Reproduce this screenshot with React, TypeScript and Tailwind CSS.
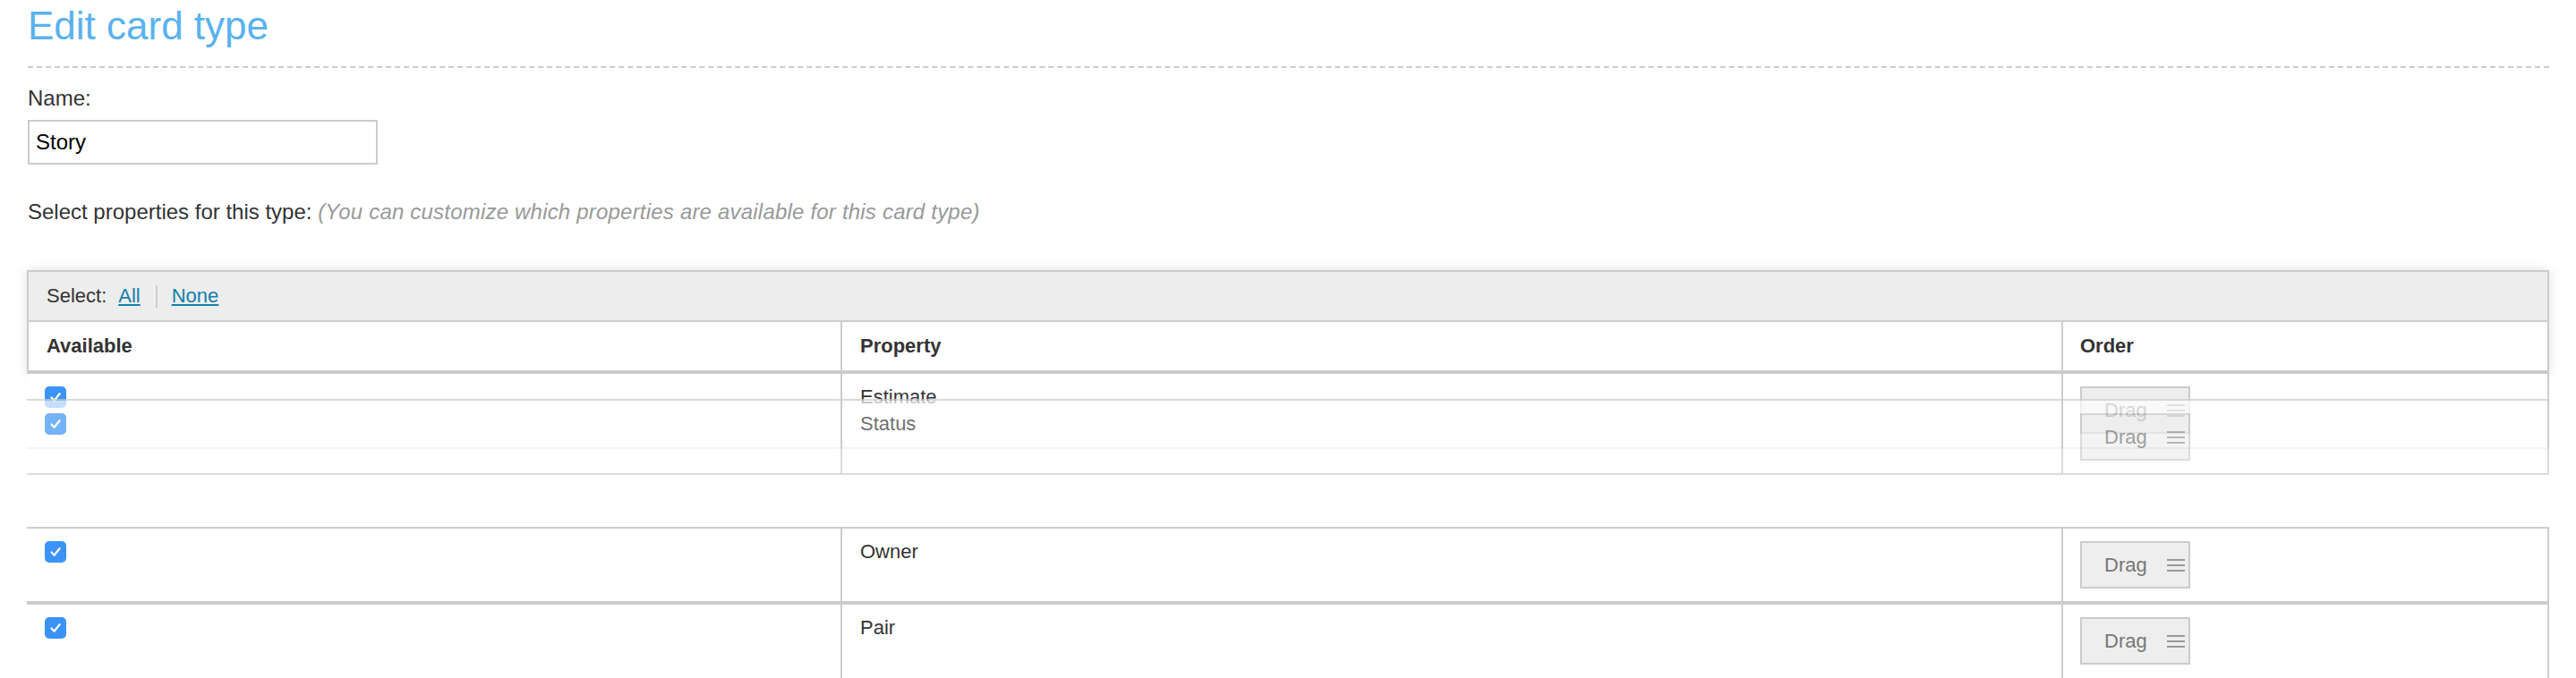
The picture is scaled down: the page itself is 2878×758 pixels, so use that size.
import React from "react";

const font = "font-['Liberation_Sans',Arial,Helvetica,sans-serif]";

const Checkbox = () => (
  <span className="flex h-[24px] w-[24px] items-center justify-center rounded-[5px] bg-[#3b93f7]">
    <svg width="16" height="16" viewBox="0 0 16 16" fill="none">
      <path
        d="M3.5 8.5 L6.6 11.8 L12.6 4.2"
        stroke="white"
        strokeWidth="2.2"
        strokeLinecap="round"
        strokeLinejoin="round"
      />
    </svg>
  </span>
);

const DragButton = () => (
  <div className="flex h-[53px] w-[123px] items-center border-2 border-[#ccc] bg-[#eee] pl-[25px]">
    <span className="text-[22px] leading-[24px] text-[#777]">Drag</span>
    <span className="ml-[22px] flex w-[20px] flex-col gap-[4px]">
      <span className="h-[2px] w-full bg-[#999]" />
      <span className="h-[2px] w-full bg-[#999]" />
      <span className="h-[2px] w-full bg-[#999]" />
    </span>
  </div>
);

const RowCells = ({ label }: { label: string }) => (
  <>
    <div className="border-r-2 border-[#ccc] pl-[20px] pt-[14px]">
      <Checkbox />
    </div>
    <div className="border-r-2 border-[#ccc] pl-[20px] pt-[14px] text-[22px] leading-[24px] text-[#333]">
      {label}
    </div>
    <div className="border-r-2 border-[#ccc] pl-[19px] pt-[14px]">
      <DragButton />
    </div>
  </>
);

export default function App() {
  return (
    <div className={`min-h-screen bg-white px-[30px] text-[#333] ${font}`}>
      <h1 className="pl-px pt-[7px] text-[44px] font-light leading-[44px] text-[#5ab2ee]">
        Edit card type
      </h1>
      <div className="ml-px mt-[23px] border-t-2 border-dashed border-[#ccc]" />

      <label className="mt-[22px] block pl-px text-[24px] leading-[24px]">Name:</label>
      <input
        className="ml-px mt-[12px] block h-[50px] w-[391px] border-2 border-[#ccc] px-[7px] text-[24px] text-black outline-none"
        defaultValue="Story"
      />

      <p className="mt-[41px] pl-px text-[24px] leading-[24px]">
        Select properties for this type:{" "}
        <i className="tracking-[0.2px] text-[#999]">
          (You can customize which properties are available for this card type)
        </i>
      </p>

      <div className="mt-[53px]">
        <div className="relative z-10 border-x-2 border-t-2 border-[#ccc] bg-white shadow-[0_0_12px_rgba(0,0,0,0.13)]">
          <div className="flex h-[56px] items-center border-b-2 border-[#ccc] bg-[#ededed] pl-[20px] text-[22px] leading-[24px]">
            <span>Select:</span>
            <a href="#" className="ml-[13px] text-[#137fab] underline">
              All
            </a>
            <span className="ml-[17px] h-[25px] w-[2px] bg-[#ccc]" />
            <a href="#" className="ml-[16px] text-[#137fab] underline">
              None
            </a>
          </div>
          <div className="grid h-[58px] grid-cols-[909px_1364px_1fr] border-b-4 border-[#ccc] text-[22px] font-bold leading-[24px]">
            <div className="flex items-center border-r-2 border-[#ccc] pl-[20px]">Available</div>
            <div className="flex items-center border-r-2 border-[#ccc] pl-[20px]">Property</div>
            <div className="flex items-center pl-[19px]">Order</div>
          </div>
        </div>

        {/* body */}
        <div className="relative z-20 bg-white">
          <div className="grid h-[84px] grid-cols-[911px_1364px_1fr] border-b-2 border-[#ddd]">
            <RowCells label="Estimate" />
          </div>

          {/* placeholder for the row being dragged */}
          <div className="h-[87px]" />

          <div className="grid h-[87px] grid-cols-[911px_1364px_1fr] border-y-2 border-t-[#ccc] border-b-4 border-b-[#ccc]">
            <RowCells label="Owner" />
          </div>
          <div className="grid h-[90px] grid-cols-[911px_1364px_1fr]">
            <RowCells label="Pair" />
          </div>

          {/* drag helper */}
          <div className="absolute left-0 right-0 top-[28px] grid h-[85px] grid-cols-[911px_1364px_1fr] border-y-2 border-[#ccc] bg-white opacity-70">
            <RowCells label="Status" />
          </div>
        </div>
      </div>
    </div>
  );
}
